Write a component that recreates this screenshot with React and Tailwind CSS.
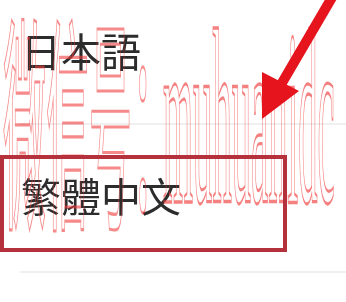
import React from 'react';

const languages = [
  { id: 'ja', label: '日本語', font: "font-['Noto_Sans_CJK_JP',sans-serif]", shift: '' },
  { id: 'zh-TW', label: '繁體中文', font: "font-['Noto_Sans_CJK_TC',sans-serif]", shift: 'mb-[6px]' },
];

const Arrow = () => (
  <svg className="absolute left-0 top-0" width="346" height="302" viewBox="0 0 346 302">
    <line x1="334" y1="-6" x2="279" y2="88" stroke="#e5141d" strokeWidth="10" strokeLinecap="round" />
    <polygon points="262,119 262,72 299,91" fill="#e5141d" />
  </svg>
);

// outlined, vertically stretched watermark text
const Watermark = () => (
  <div className="pointer-events-none absolute inset-0 overflow-hidden">
    <span className="absolute left-[3px] top-0 origin-top-left scale-y-[5.3] whitespace-nowrap font-['Noto_Sans_CJK_SC',sans-serif] text-[43px] leading-none text-transparent [-webkit-text-stroke:0.6px_rgba(240,60,60,0.6)]">
      微信号：
    </span>
    <span className="absolute left-[163px] -top-[5px] origin-top-left scale-x-[0.84] scale-y-[5.45] whitespace-nowrap font-['Liberation_Serif',serif] text-[46px] leading-none text-transparent [-webkit-text-stroke:0.6px_rgba(240,60,60,0.65)]">
      muhuanidc
    </span>
  </div>
);

export default function App() {
  return (
    <div className="relative h-[302px] w-[346px] overflow-hidden bg-white">
      <div className="-mt-[23px] pl-[20px] blur-[0.7px]">
        {languages.map((lang) => (
          <div
            key={lang.id}
            className="flex h-[148px] items-center border-b-2 border-[#f0f0f0]"
          >
            <span className={`${lang.font} ${lang.shift} pl-[1px] text-[40px] leading-none text-[#2c2c2c]`}>
              {lang.label}
            </span>
          </div>
        ))}
      </div>

      <Watermark />

      {/* highlight box around current choice */}
      <div className="absolute left-0 top-[155px] h-[97px] w-[287px] border-4 border-[#b5313b] blur-[0.4px]" />

      <Arrow />
    </div>
  );
}
